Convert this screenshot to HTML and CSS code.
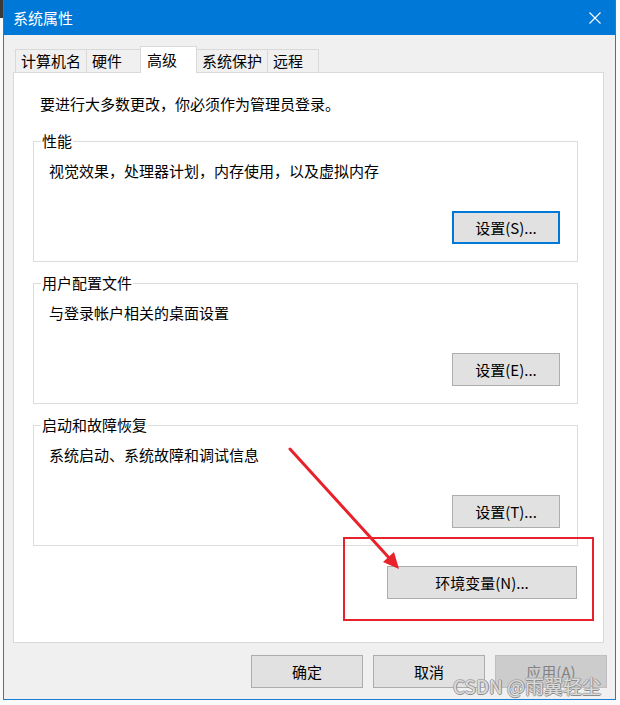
FILE: index.html
```html
<!DOCTYPE html>
<html lang="zh-CN">
<head>
<meta charset="utf-8">
<title>系统属性</title>
<link rel="stylesheet" href="styles.css">
</head>
<body>
<div class="backdrop-mark"></div>
<div class="window">
  <div class="titlebar">
    <span class="title">系统属性</span>
    <svg class="close" width="12" height="12" viewBox="0 0 12 12"><path d="M0.5 0.5 L11.5 11.5 M11.5 0.5 L0.5 11.5" stroke="#fff" stroke-width="1.1" fill="none"/></svg>
  </div>
  <div class="client">
    <div class="tabs">
      <div class="tab">计算机名</div>
      <div class="tab">硬件</div>
      <div class="tab tab-active">高级</div>
      <div class="tab">系统保护</div>
      <div class="tab tab-narrow">远程</div>
    </div>
    <div class="panel">
      <p class="notice">要进行大多数更改，你必须作为管理员登录。</p>
      <fieldset class="group">
        <legend>性能</legend>
        <div class="group-body">
          <p class="desc">视觉效果，处理器计划，内存使用，以及虚拟内存</p>
          <button class="btn btn-set btn-focus">设置(S)...</button>
        </div>
      </fieldset>
      <fieldset class="group">
        <legend>用户配置文件</legend>
        <div class="group-body">
          <p class="desc">与登录帐户相关的桌面设置</p>
          <button class="btn btn-set">设置(E)...</button>
        </div>
      </fieldset>
      <fieldset class="group">
        <legend>启动和故障恢复</legend>
        <div class="group-body">
          <p class="desc">系统启动、系统故障和调试信息</p>
          <button class="btn btn-set">设置(T)...</button>
        </div>
      </fieldset>
      <div class="env-row">
        <button class="btn btn-env">环境变量(N)...</button>
      </div>
    </div>
    <div class="footer">
      <button class="btn btn-foot">确定</button>
      <button class="btn btn-foot">取消</button>
      <button class="btn btn-foot btn-disabled">应用(A)</button>
    </div>
  </div>
</div>
<div class="annot-box"></div>
<svg class="annot-arrow" width="620" height="705" viewBox="0 0 620 705">
  <line x1="290" y1="449" x2="391" y2="560" stroke="#e8222b" stroke-width="3" stroke-linecap="round"/>
  <polygon points="399,569 383,562 394,552" fill="#e8222b"/>
</svg>
<div class="watermark">CSDN @雨翼轻尘</div>
</body>
</html>
```
FILE: styles.css
```css
html, body {
  margin: 0;
  padding: 0;
}
body {
  width: 620px;
  height: 705px;
  overflow: hidden;
  position: relative;
  background: #fafafa;
  font-family: "Noto Sans CJK SC", "Microsoft YaHei", sans-serif;
  font-size: 15px;
  color: #000;
}
.backdrop-mark {
  position: absolute;
  left: 0;
  top: 0;
  width: 3px;
  height: 18px;
  background: #3a3a3a;
}
.window {
  margin-left: 3px;
  width: 613px;
  height: 700px;
  box-sizing: border-box;
  border: 1px solid #1a7fd4;
  border-top: 0;
  background: #f0f0f0;
  display: flex;
  flex-direction: column;
}
.titlebar {
  height: 35px;
  flex: none;
  background: #0078d7;
  display: flex;
  align-items: center;
  padding: 0 14px 0 9px;
}
.title {
  color: #fff;
  font-size: 15px;
  line-height: 20px;
}
.close {
  margin-left: auto;
  display: block;
}
.client {
  flex: 1;
  display: flex;
  flex-direction: column;
  padding: 11px 11px 0 9px;
}
.tabs {
  display: flex;
  align-items: flex-start;
  height: 27px;
  margin-bottom: -1px;
  padding-left: 2px;
  position: relative;
  z-index: 1;
}
.tab {
  box-sizing: border-box;
  height: 23px;
  margin-top: 3px;
  min-width: 55px;
  padding: 0 5px;
  border: 1px solid #d9d9d9;
  border-bottom: 0;
  background: #f0f0f0;
  line-height: 22px;
  white-space: nowrap;
}
.tab + .tab {
  margin-left: -1px;
}
.tab-narrow {
  min-width: 52px;
}
.tab-active {
  height: 27px;
  margin-top: 0;
  min-width: 57px;
  padding: 2px 5px 0 6px;
  background: #fff;
  position: relative;
  z-index: 2;
}
.panel {
  box-sizing: border-box;
  height: 571px;
  flex: none;
  background: #fff;
  border: 1px solid #d9d9d9;
  padding: 0 25px 0 19px;
  display: flex;
  flex-direction: column;
}
.notice {
  margin: 21px 0 0 7px;
  line-height: 20px;
}
.group {
  margin: 11px 0 0 0;
  padding: 0;
  min-width: 0;
  border: 1px solid #dcdcdc;
}
.notice + .group {
  margin-top: 17px;
}
.group legend {
  margin-left: 7px;
  padding: 0 1px;
  line-height: 20px;
}
.group-body {
  display: flex;
  flex-direction: column;
  padding: 10px 17px 17px 15px;
}
.desc {
  margin: 0;
  line-height: 20px;
}
.btn {
  box-sizing: border-box;
  height: 33px;
  padding: 0;
  margin: 0;
  border: 1px solid #adadad;
  background: #e1e1e1;
  font-family: "Noto Sans CJK SC", "Microsoft YaHei", sans-serif;
  font-size: 15px;
  color: #000;
  line-height: 20px;
}
.btn-set {
  width: 108px;
  margin-top: 30px;
  align-self: flex-end;
}
.btn-focus {
  border: 2px solid #0078d7;
}
.env-row {
  display: flex;
  justify-content: flex-end;
  margin-top: 20px;
  padding-right: 1px;
}
.btn-env {
  width: 190px;
}
.footer {
  display: flex;
  justify-content: flex-end;
  gap: 10px;
  margin: 12px -3px 0 0;
}
.btn-foot {
  width: 112px;
}
.btn-disabled {
  background: #cccccc;
  border-color: #bfbfbf;
  color: #838383;
}
.annot-box {
  position: absolute;
  left: 343px;
  top: 537px;
  width: 251px;
  height: 84px;
  box-sizing: border-box;
  border: 2px solid #e8222b;
}
.annot-arrow {
  position: absolute;
  left: 0;
  top: 0;
  pointer-events: none;
}
.watermark {
  position: absolute;
  left: 453px;
  top: 673px;
  font-size: 19px;
  line-height: 26px;
  color: rgba(240, 240, 240, 0.8);
  text-shadow: 1px 0 0 #8c8c8c, -1px 0 0 #a8a8a8, 0 1px 0 #8c8c8c, 0 -1px 0 #b0b0b0;
  white-space: nowrap;
}
```
